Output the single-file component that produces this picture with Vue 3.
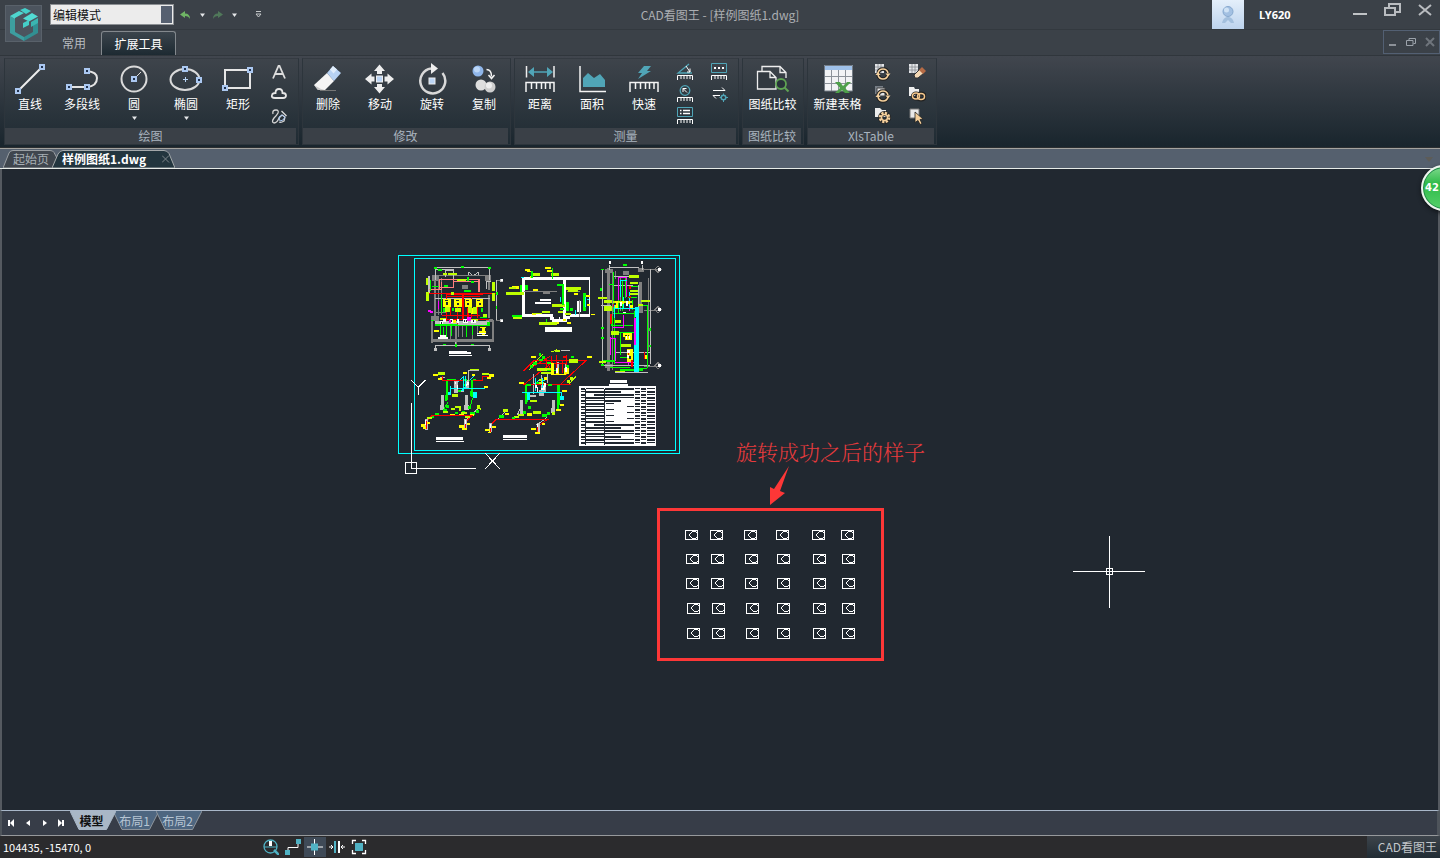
<template>
  <div class="app">
    <header class="header">
      <button class="logo" aria-label="CAD看图王">
        <svg width="36" height="36" viewBox="0 0 36 36" v-html="logo"></svg>
      </button>
      <div class="titlebar">
        <div class="quick">
          <div class="mode">
            <select v-model="mode" aria-label="模式">
              <option>编辑模式</option>
              <option>浏览模式</option>
            </select>
          </div>
          <button class="quick-btn" aria-label="撤销">
            <svg width="12" height="10" viewBox="0 0 12 10"><path d="M0 4.500L5 1v2.500q5 0 5 5.500-1.500-3-5-3v2z" fill="#6fb565" /></svg>
          </button>
          <button class="quick-arrow" aria-label="撤销列表"><svg width="5" height="4" v-html="caret"></svg></button>
          <button class="quick-btn" aria-label="重做">
            <svg width="12" height="10" viewBox="0 0 12 10"><path d="M11 4.500L6 1v2.500q-5 0-5 5.500 1.500-3 5-3v2z" fill="#50785a" /></svg>
          </button>
          <button class="quick-arrow" aria-label="重做列表"><svg width="5" height="4" v-html="caret"></svg></button>
          <button class="quick-more" aria-label="更多">
            <svg width="7" height="7" viewBox="0 0 7 7"><path d="M1 .5h5M1 3h5L3.500 6z" fill="none" stroke="#c5c8ca" /></svg>
          </button>
        </div>
        <h1 class="title">CAD看图王 - [样例图纸1.dwg]</h1>
        <div class="account">
          <div class="avatar">
            <svg width="20" height="20" viewBox="0 0 20 20">
              <path d="M4 18q1-5 5-6h2q4 1 5 6h-3l-3-3-3 3z" fill="#a3bfdd" />
              <circle cx="10" cy="6.500" r="5" fill="#a3c0e2" stroke="#86a8ce" />
              <circle cx="8.500" cy="5" r="2.500" fill="#cfe2f5" />
            </svg>
          </div>
          <span class="user">LY620</span>
          <div class="window-btns">
            <button aria-label="最小化"><svg width="18" height="16"><path d="M1 12h14" stroke="#c0c3c6" stroke-width="2" /></svg></button>
            <button aria-label="还原"><svg width="18" height="16"><path d="M5 5V2h11v8h-4M1 6h10v7H1z" fill="none" stroke="#b9bcc0" stroke-width="2" /></svg></button>
            <button aria-label="关闭"><svg width="18" height="16"><path d="M3 3l12 10M15 3l-12 10" stroke="#b9bcc0" stroke-width="2" /></svg></button>
          </div>
        </div>
      </div>
      <nav class="menu">
        <button
          v-for="item in menus"
          :key="item"
          :class="['menu-tab', { 'menu-tab--active': item === activeMenu }]"
          @click="activeMenu = item"
        >
          {{ item }}
        </button>
        <div class="child-btns">
          <button aria-label="最小化"><svg width="10" height="10"><path d="M2 8h7" stroke="#8c9198" stroke-width="2" /></svg></button>
          <button aria-label="还原"><svg width="10" height="10"><path d="M3 3V1.500h6.500v5H7.500M.5 3.500h6.500v5H.5z" fill="none" stroke="#9ca3ab" /></svg></button>
          <button aria-label="关闭"><svg width="10" height="10"><path d="M1 1l8 8M9 1l-8 8" stroke="#6f757c" stroke-width="2" /></svg></button>
        </div>
      </nav>
    </header>

    <div class="ribbon">
      <section v-for="group in groups" :key="group.title" class="group">
        <div class="group-body">
          <button
            v-for="tool in group.tools"
            :key="tool.name"
            :class="['tool', { 'tool--wide': tool.name.length > 3 }]"
          >
            <svg width="36" height="34" viewBox="0 0 36 34" v-html="icons[tool.icon]"></svg>
            <span>{{ tool.name }}</span>
            <svg v-if="tool.menu" class="tool-caret" width="5" height="4" v-html="caret"></svg>
          </button>
          <div v-if="group.small" class="small-tools">
            <button v-for="item in group.small" :key="item.name" class="small-tool" :aria-label="item.name">
              <svg width="18" height="18" viewBox="0 0 18 18" v-html="icons[item.icon]"></svg>
            </button>
          </div>
        </div>
        <h2 class="group-title">{{ group.title }}</h2>
      </section>
    </div>

    <div class="doc-tabs">
      <button class="doc-tab">
        <svg class="tab-shape" viewBox="0 0 54 18" preserveAspectRatio="none">
          <path d="M0 18L6 3q1-2.500 4-2.500h37q3 0 4 2l3 5.500v10z" fill="#3f464e" stroke="#9a9fa3" />
        </svg>
        <span>起始页</span>
      </button>
      <button class="doc-tab doc-tab--active">
        <svg class="tab-shape" viewBox="0 0 123 18" preserveAspectRatio="none">
          <path d="M0 18L6 4q2-3.500 5-3.500h101q3 0 5 3L123 18z" fill="#22353e" stroke="#a3a8aa" />
        </svg>
        <span>样例图纸1.dwg</span>
        <svg class="doc-close" width="8" height="8"><path d="M0 .5l7 7M7 .5l-7 7" stroke="#7c8589" /></svg>
      </button>
      <button class="doc-list" aria-label="文档列表"><svg width="8" height="5"><path d="M0 0h8L4 5z" fill="#5d5c58" /></svg></button>
    </div>

    <main class="canvas">
      <!-- 图纸: 3 个单位对应 1 像素 -->
      <svg class="sheet" width="300" height="240" viewBox="0 0 900 720" shape-rendering="crispEdges">
        <path d="M25.500 31.500H868.500V625.500H25.500zM73.500 40.500H856.500V616.500H73.500z" fill="none" stroke="#0ff" stroke-width="3" />
        <path v-for="(line, i) in lines" :key="i" :d="line.d" fill="none" :stroke="line.color" stroke-width="3" />
        <path v-for="(layer, i) in layers" :key="i" :d="boxes(layer.boxes)" :fill="layer.color" />
        <path d="M567 423h231v180H567z" fill="#fff" />
        <path :d="tableGaps" fill="#212830" />
        <g fill="none" stroke="#fff" stroke-width="3">
          <path d="M64.500 474V670.500H258M46.500 652.500h33v33h-33z" />
          <path d="M64 406l21 21 21-21M85.500 427v24M286 625l43 46M329 625l-43 46" />
        </g>
      </svg>

      <p class="note">旋转成功之后的样子</p>
      <svg class="note-arrow" width="22" height="40" viewBox="0 0 22 40"><path d="M20 0L11 25l5 2L1 39V21l4 2z" fill="#fd3737" /></svg>
      <svg class="result" width="227" height="153" viewBox="657 508 227 153" shape-rendering="crispEdges">
        <rect x="658.500" y="509.500" width="224" height="150" fill="none" stroke="#fd3737" stroke-width="3" />
        <g v-for="(seat, i) in seats" :key="i" :transform="`translate(${seat.x} ${seat.y})`" fill="none" stroke="#fff">
          <path :d="`M.5.5h12v${seat.h - 1}H.5z`" />
          <path d="M7.500 1.500h3l2 2v3l-2 2h-3l-3-3v-1z" />
        </g>
      </svg>

      <svg class="cursor" width="72" height="72" viewBox="0 0 72 72" shape-rendering="crispEdges">
        <path d="M36.500 0v72M0 35.500h72M33.500 32.500h6v6h-6z" fill="none" stroke="#fff" />
      </svg>
      <div class="badge">42</div>
    </main>

    <div class="layouts">
      <div class="layout-nav">
        <button v-for="nav in navs" :key="nav.name" :aria-label="nav.name">
          <svg width="8" height="8" viewBox="0 0 8 8"><path :d="nav.d" fill="#fff" /></svg>
        </button>
      </div>
      <button
        v-for="item in layouts"
        :key="item"
        :class="['layout-tab', { 'layout-tab--active': item === activeLayout }]"
        @click="activeLayout = item"
      >
        <svg class="tab-shape" viewBox="0 0 46 19" preserveAspectRatio="none"><path d="M0 0l9 18.500h27.500L46 0" /></svg>
        <span>{{ item }}</span>
      </button>
    </div>

    <footer class="status">
      <span class="coords">104435, -15470, 0</span>
      <button
        v-for="item in toggles"
        :key="item.name"
        :class="['toggle', { 'toggle--on': item.on }]"
        :aria-label="item.name"
        @click="item.on = !item.on"
      >
        <svg width="16" height="16" viewBox="0 0 16 16" v-html="item.svg"></svg>
      </button>
      <span class="brand">CAD看图王</span>
    </footer>
  </div>
</template>

<script setup>
import { ref } from 'vue';

const mode = ref('编辑模式');
const menus = ['常用', '扩展工具'];
const activeMenu = ref('扩展工具');
const layouts = ['模型', '布局1', '布局2'];
const activeLayout = ref('模型');

const caret = '<path d="M0 .5h5L2.500 4z" fill="#e4e6e8"/>';

const logo = `
  <path d="M4 10l5 3v13l9 5v4L4 27z" fill="#3d9ea0"/>
  <path d="M18 31l9-5v-8l5-3v12l-14 8z" fill="#318f92"/>
  <path d="M4 10L13 5l5 2-9 5v1z" fill="#4fd6cf"/>
  <path d="M14 4l5-2 6 3-5 3z" fill="#45cfc9"/>
  <path d="M26 7l6 3.500-9 5-6-3z" fill="#52dcd4"/>
  <path d="M17 17l6-3v5l-6 3z" fill="#45cfc9"/>
  <path d="M25 16l7-4v5l-7 4z" fill="#3bb5b1"/>`;

// 夹点方块
const node = (x, y) =>
  `<rect x="${x - 3}" y="${y - 3}" width="6" height="6" fill="#abc8f1"/><rect x="${x - 1}" y="${y - 1}" width="2" height="2" fill="#20324f"/>`;

const ruler = '<path d="M4 30V20.500h28V30M9.500 21v6M14.500 21v6M19.500 21v6M23.500 21v6M28 21v6" fill="none" stroke="#f4f4f4" stroke-width="1.500"/>';
const smallRuler = '<path d="M1.500 17v-4.500h15V17M5 13v3M8 13v3M11 13v3M14 13v3" fill="none" stroke="#fff"/>';
const grid = '<path d="M1 1h9v9H1z" fill="#e3e5e8"/><path d="M4 1v9M7 1v9M1 4h9M1 7h9" stroke="#858b91" stroke-width=".8"/>';
const cycle = '<path d="M4 10q1-4 5-4 4 0 5 4M14 12q-1 4-5 4-4 0-5-4" fill="none" stroke="#222" stroke-width="3.500"/><path d="M4 10q1-4 5-4 4 0 5 4M14 12q-1 4-5 4-4 0-5-4" fill="none" stroke="#f5d09c" stroke-width="1.500"/><path d="M1.500 12h5L4 9zM11.500 10.500h5L14 13.500z" fill="#f5d09c"/>';

const icons = {
  line: `<path d="M6 29L30 5" stroke="#eee" stroke-width="2"/>${node(30, 5)}${node(6, 29)}`,
  polyline: `<path d="M5 25h18q10-1 10-9 0-6-10-7" fill="none" stroke="#e4e4e4" stroke-width="2"/>${node(5, 25)}${node(23, 25)}${node(23, 9)}`,
  circle: `<circle cx="18" cy="17" r="12.500" fill="none" stroke="#dadada" stroke-width="2"/><path d="M18 17l7-7" stroke="#ddd"/>${node(18, 17)}`,
  ellipse: `<ellipse cx="17" cy="17.500" rx="14.500" ry="10.500" fill="none" stroke="#dadada" stroke-width="2"/><path d="M15 17.500h5M17.500 15v5" stroke="#b8d4f4"/>${node(17, 7)}${node(31, 18)}`,
  rect: `<path d="M5 8h25v18H5z" fill="none" stroke="#e6e6e6" stroke-width="2"/>${node(30, 8)}${node(5, 26)}`,
  erase: '<path d="M10 28.500h16" stroke="#777"/><path d="M4 23L17 11l7 8-9 9H8z" fill="#f5f5f5"/><path d="M4 23l4 5h7l-4-1z" fill="#c9c9c9"/><path d="M17 11l6-7 8 7-7 8z" fill="#b7d2f4"/><path d="M20 7.500L23 4l4 3.500-3.500 4z" fill="#e0edfc"/>',
  move: '<path d="M17.500 2.500l5.500 6.500h-3v3h-5V9h-3zM17.500 31.500l5.500-6.500h-3v-3h-5v3h-3zM3 17l6.500-5.500v3h3v5h-3v3zM32 17l-6.500-5.500v3h-3v5h3v3z" fill="#eee"/><rect x="14.500" y="14" width="6" height="6" fill="#bcd5f5" stroke="#eee"/>',
  rotate: '<path d="M28.500 11A12.500 12.500 0 1 1 17 6.500" fill="none" stroke="#d9d9d9" stroke-width="2.500"/><path d="M17 1l7 5.500-7 5.500z" fill="#eee"/><rect x="15" y="16" width="6" height="6" fill="#bcd5f5" stroke="#eee"/>',
  copy: '<circle cx="12" cy="9" r="5.500" fill="#8fb6ea"/><circle cx="11" cy="7.500" r="3" fill="#bcd7f8"/><circle cx="15" cy="23" r="5.500" fill="#dedede"/><circle cx="24" cy="25" r="5.500" fill="#cfcfcf"/><circle cx="23" cy="23.500" r="3" fill="#eee"/><path d="M20.500 7.500q5 0 5 7M22.500 13l3 3.500 3-3.500" fill="none" stroke="#f4f4f4" stroke-width="1.500"/>',
  distance: `<path d="M4.500 4v11.500M32 4v11.500" stroke="#eee" stroke-width="1.500"/><path d="M9 10h19" stroke="#50a5b7" stroke-width="1.500"/><path d="M6 10l6-5v10zM31 10l-6-5v10z" fill="#50a5b7"/>${ruler}`,
  area: '<path d="M9 25v-9l5-5 6 5 6-4 5 6v7z" fill="#50a5b7"/><path d="M6 4v25.500h26" fill="none" stroke="#f4f4f4" stroke-width="1.500"/>',
  fast: `<path d="M18 4h7l-4 5h4L12 17l4-6h-4z" fill="#50a5b7"/>${ruler}`,
  compare: '<path d="M7 9V4.500h18l6 6V16M25 4.500v6h6" fill="none" stroke="#eee" stroke-width="1.300"/><path d="M2.500 9.500H15l6 6V27H2.500zM15 9.500v6h6" fill="#323940" stroke="#eee" stroke-width="1.300"/><circle cx="26" cy="22" r="5" fill="#29323a" stroke="#5fa453" stroke-width="1.800"/><path d="M29.500 25.500l4 4" stroke="#5fa453" stroke-width="2"/>',
  sheet: '<path d="M4 4h29v25H4z" fill="#f2f3f5"/><path d="M4 3h29v5H4z" fill="#9fc1ea"/><path d="M4 14.500h29M4 21.500h29M11.500 8v21M18.500 8v21M25.500 8v21" stroke="#8c9299"/><path d="M4.500 3.500h28v25.500h-28z" fill="none" stroke="#747c85"/><path d="M15 20h5l3 4 4-4h4l-6 6 5 5h-5l-3-3-3 3h-4l5-5z" fill="#4ea04a"/>',
  text: '<path d="M3 15.500L8.500 3h1L15 15.500M5.500 11h7" fill="none" stroke="#dcdcdc" stroke-width="1.800"/>',
  cloud: '<path d="M5 13q-4 0-3-3 .5-2 3.500-2 0-4 3.500-4 3.500 0 3.500 4 3.500 0 3.500 2.500 0 2.500-3 2.500z" fill="none" stroke="#e6e6e6" stroke-width="1.800"/>',
  sketch: '<path d="M3 7q-1-4 3-4 3 0 2 3-1 2-4 5-3 4 0 5 3 0 5-5l3-3 3 2-1 4q-3 2-5 1" fill="none" stroke="#d6d6d6" stroke-width="1.300"/><path d="M11.500 4l5 5" stroke="#e0e0e0" stroke-width="1.300"/><path d="M9 10l3-2 3 2-2 3-3 1z" fill="none" stroke="#abc8f1"/>',
  angle: `<path d="M13 1L2 10h14" fill="none" stroke="#50a5b7" stroke-width="1.300"/><path d="M10 3l4 6M14 5.500V9h-3" fill="none" stroke="#fff"/>${smallRuler}`,
  radius: `<circle cx="9" cy="5.500" r="4.800" fill="none" stroke="#50a5b7" stroke-width="1.300"/><path d="M7 7V3.500h3.500M7 3.500l4 4" fill="none" stroke="#fff"/>${smallRuler}`,
  list: `<path d="M1.500.5h15v9h-15z" fill="none" stroke="#50a5b7"/><path d="M4 3.500h1.500M7 3.500h7M4 6.500h1.500M7 6.500h7" stroke="#fff" stroke-width="1.500"/>${smallRuler}`,
  dots: `<path d="M1.500.5h15v9h-15z" fill="none" stroke="#50a5b7"/><path d="M4 5h2M8 5h2M12 5h2" stroke="#fff" stroke-width="2"/>${smallRuler}`,
  convert: '<path d="M3 5.500h12l-3-3M10 10.500H3l3 3" fill="none" stroke="#fff"/><circle cx="13.500" cy="12.500" r="2.300" fill="none" stroke="#50a5b7" stroke-width="1.500"/><path d="M13.500 8.500v2M13.500 15v2M9.500 12.500h2M16 12.500h2" stroke="#50a5b7"/>',
  refresh: `${grid}${cycle}`,
  refreshAll: '<path d="M1 1h8v8H1z" fill="#777e86"/><path d="M3 3h8v8H3z" fill="#e3e5e8" stroke="#444"/>' + cycle,
  config: '<path d="M1 1h5l2 2h4v7H1z" fill="#ececec"/><circle cx="10.500" cy="10.500" r="4" fill="none" stroke="#222" stroke-width="5"/><circle cx="10.500" cy="10.500" r="4.500" fill="none" stroke="#f5d09c" stroke-width="2.500" stroke-dasharray="2.200 1.300"/><circle cx="10.500" cy="10.500" r="3" fill="none" stroke="#f5d09c" stroke-width="1.500"/>',
  clear: `${grid}<path d="M6 12l6-6 4 4-6 5H7z" fill="#f5d9b5" stroke="#333"/><path d="M11 7l3-3 4 4-3 3z" fill="#b66b45"/>`,
  link: '<path d="M1 2h5l1 2h4v7H1z" fill="#eee"/><ellipse cx="8" cy="11" rx="3.500" ry="3" fill="none" stroke="#222" stroke-width="3"/><ellipse cx="13" cy="11.500" rx="4" ry="3" fill="none" stroke="#222" stroke-width="4"/><ellipse cx="8" cy="11" rx="3.500" ry="3" fill="none" stroke="#f5c78c" stroke-width="1.500"/><ellipse cx="13" cy="11.500" rx="3.500" ry="3" fill="none" stroke="#f5c78c" stroke-width="1.500"/>',
  pick: '<path d="M2 2h9v9H2z" fill="#e9e9e9" stroke="#777"/><path d="M7 5l8 7-3 .5 2 4-2 1-2-4-3 2z" fill="#f5d09c" stroke="#222" stroke-width=".8"/>',
};

const groups = [
  {
    title: '绘图',
    tools: [
      { name: '直线', icon: 'line' },
      { name: '多段线', icon: 'polyline' },
      { name: '圆', icon: 'circle', menu: true },
      { name: '椭圆', icon: 'ellipse', menu: true },
      { name: '矩形', icon: 'rect' },
    ],
    small: [
      { name: '文字', icon: 'text' },
      { name: '云线', icon: 'cloud' },
      { name: '手绘', icon: 'sketch' },
    ],
  },
  {
    title: '修改',
    tools: [
      { name: '删除', icon: 'erase' },
      { name: '移动', icon: 'move' },
      { name: '旋转', icon: 'rotate' },
      { name: '复制', icon: 'copy' },
    ],
  },
  {
    title: '测量',
    tools: [
      { name: '距离', icon: 'distance' },
      { name: '面积', icon: 'area' },
      { name: '快速', icon: 'fast' },
    ],
    small: [
      { name: '角度', icon: 'angle' },
      { name: '半径', icon: 'radius' },
      { name: '列表', icon: 'list' },
      { name: '坐标', icon: 'dots' },
      { name: '比例', icon: 'convert' },
    ],
  },
  { title: '图纸比较', tools: [{ name: '图纸比较', icon: 'compare' }] },
  {
    title: 'XlsTable',
    tools: [{ name: '新建表格', icon: 'sheet' }],
    small: [
      { name: '更新表格', icon: 'refresh' },
      { name: '全部更新', icon: 'refreshAll' },
      { name: '设置', icon: 'config' },
      { name: '清除', icon: 'clear' },
      { name: '链接', icon: 'link' },
      { name: '选择', icon: 'pick' },
    ],
  },
];

const navs = [
  { name: '第一个', d: 'M0 1h2v6H0zM6 0v8L2 4z' },
  { name: '上一个', d: 'M6 1v6L2 4z' },
  { name: '下一个', d: 'M3 1v6l4-3z' },
  { name: '最后一个', d: 'M2 0v8l4-4zM6 1h2v6H6z' },
];

const toggles = ref([
  { name: '缩放', on: false, svg: '<circle cx="7.500" cy="7.500" r="6.500" fill="none" stroke="#50b2c4" stroke-width="1.300"/><path d="M1 8h13" stroke="#50b2c4"/><path d="M6 2h3v5H6z" fill="#fff"/><path d="M11 11l5 5" stroke="#50b2c4" stroke-width="2.500"/>' },
  { name: '正交', on: false, svg: '<path d="M3 12V8.500h10V4" fill="none" stroke="#fff"/><path d="M11 0h5v5h-5zM0 11h5v5H0z" fill="#50b2c4"/>' },
  { name: '对象捕捉', on: true, svg: '<path d="M7.500 0v16M0 8h16" stroke="#fff"/><path d="M4 4.500h7v7H4z" fill="#50b2c4"/>' },
  { name: '线宽', on: false, svg: '<path d="M5 2h2v12H5z" fill="#50b2c4"/><path d="M10 2v12" stroke="#fff" stroke-width="2"/><path d="M0 8h4M2 6l2 2-2 2M16 8h-4M14 6l-2 2 2 2" fill="none" stroke="#fff"/>' },
  { name: '全屏', on: false, svg: '<path d="M1.500 5V1.500H5M11 1.500h3.500V5M14.500 11v3.500H11M5 14.500H1.500V11" fill="none" stroke="#fff" stroke-width="1.300"/><path d="M4 4h8v8H4z" fill="#50b2c4"/>' },
]);

// 对齐到整像素
const snap = (value) => Math.round(value / 3) * 3;

// 每四个数一组: x y 宽 高
const boxes = (text) =>
  text
    .trim()
    .split(/\s*,\s*/)
    .map((item) => {
      const [x, y, w, h] = item.split(' ').map(snap);
      const width = Math.max(w, 3);
      return `M${x} ${y}h${width}v${Math.max(h, 3)}h-${width}z`;
    })
    .join('');

const layers = [
  // 平面图
  { color: '#808080', boxes: '126 90 20 18,126 90 174 4,285 90 17 18,132 95 5 120,145 100 3 110,153 100 3 112,294 110 6 25,294 150 7 70,122 212 25 15,288 222 22 8,122 226 5 70,125 283 187 8,194 240 6 60,217 120 17 12,205 232 3 45,215 232 3 45,260 235 3 40,305 225 5 60,320 104 12 3,318 225 12 3,133 200 40 4,180 240 3 44,246 238 3 44' },
  { color: '#c0c0c0', boxes: '135 66 165 3,135 66 3 40,298 66 3 40,114 93 5 50,318 104 3 120,135 300 165 3,135 300 3 15,298 300 3 15,196 290 3 14,135 72 55 3,135 238 165 3,135 158 165 3,189 72 3 50,288 108 14 3,288 108 3 25,166 76 24 3,166 76 3 20,132 309 9 9,294 309 9 9,330 101 9 9,330 222 9 9,136 228 162 9' },
  { color: '#ff7f7f', boxes: '148 102 122 3,148 102 4 30,190 108 80 3,265 105 5 36,150 127 42 3,189 105 3 24,118 131 38 3,154 110 3 20' },
  { color: '#f00', boxes: '118 144 200 3,168 148 110 4,168 148 4 65,217 150 6 75,172 153 100 3,155 210 115 4,202 180 3 60,262 180 4 40,244 160 3 60,232 190 6 30,180 180 3 32,168 190 4 40,155 222 140 3' },
  { color: '#ff0', boxes: '160 162 23 24,192 162 23 24,224 162 20 24,258 162 20 24,270 246 18 4,275 246 8 24,268 258 20 5,131 256 14 6,184 225 14 8,244 188 14 18' },
  { color: '#212830', boxes: '166 166 10 4,168 172 5 8,198 166 10 4,201 174 6 6,228 166 8 4,230 173 5 7,262 166 9 4,266 173 6 7,248 192 3 8' },
  { color: '#bfff00', boxes: '108 98 6 20,108 141 10 27,306 110 8 28,306 144 8 24,175 84 26 7,202 101 26 7,160 85 12 7,164 186 14 15,196 188 18 12,235 186 12 18,250 186 12 20,278 206 13 8,183 140 8 10,240 222 24 6,150 218 18 5' },
  { color: '#0f0', boxes: '131 66 8 6,212 63 10 5,295 66 9 6,144 72 12 5,232 97 5 12,120 106 4 32,318 140 6 8,318 182 4 8,153 150 4 55,242 109 10 5,160 298 10 4,194 296 6 9,242 296 10 4,126 122 20 3,223 135 20 5,135 236 70 3,135 241 165 3,150 240 3 40,159 245 3 35,168 242 3 38,184 242 3 30,228 240 3 36,246 242 3 26,270 215 20 3,158 188 5 12,186 190 5 10,272 190 5 12,122 226 10 4,290 230 10 8,162 120 11 5' },
  { color: '#fff', boxes: '145 275 29 6,150 270 18 5,262 265 28 4,262 269 33 4,160 222 8 9,180 222 9 12,202 222 5 12,218 222 15 12,244 224 15 10,150 228 8 8,177 318 54 3,177 321 66 6,177 330 69 3,332 103 5 5,332 224 5 5' },
  { color: '#f0f', boxes: '145 167 4 24,114 195 10 6,119 199 10 5,231 216 12 12,176 226 5 9' },
  { color: '#212830', boxes: '154 230 3 6,184 224 3 6,222 225 3 7,250 226 3 5,228 226 3 5' },
  // 剖面图
  { color: '#fff', boxes: '396 96 204 9,396 96 9 120,398 207 90 9,519 100 9 124,597 96 3 120,540 207 58 8,450 162 32 6,435 171 48 6,465 246 81 15,561 167 12 32,480 216 12 8,486 222 12 9,496 222 35 9,524 212 16 8,508 215 4 16,522 215 4 16' },
  { color: '#808080', boxes: '402 138 100 3,458 141 20 6,567 165 3 50,530 139 40 3' },
  { color: '#ff0', boxes: '404 72 15 6,412 77 12 4,420 92 8 5,464 66 18 5,470 74 14 5,366 122 22 8,428 132 16 6,426 204 12 5,494 231 12 7,531 232 12 5,602 206 12 4,592 178 10 5,586 150 14 6,520 222 10 6,552 143 12 5' },
  { color: '#bfff00', boxes: '428 85 22 10,484 85 25 10,348 140 55 9,358 125 22 6,368 214 28 10,528 126 45 10,534 135 30 6,486 177 38 10,446 230 55 8,430 204 26 4,455 198 25 5,504 198 16 6,526 205 18 6' },
  { color: '#0f0', boxes: '424 78 5 22,485 68 4 34,389 121 5 20,404 120 9 16,366 210 30 5,516 120 6 60,580 144 9 54,528 170 8 26,509 190 12 7,500 118 22 5,540 190 8 10,468 222 4 8' },
  { color: '#0ff', boxes: '394 95 8 3,510 155 4 15,586 156 3 30,556 196 3 16,591 163 5 4' },
  // 立面图
  { color: '#808080', boxes: '651 68 9 310,645 72 23 12,744 68 18 12,699 78 18 13,690 98 3 100,774 100 3 220,665 85 3 290,746 110 9 80,748 184 12 20,762 73 42 3,762 194 42 3,762 362 42 3,645 357 24 12,742 315 6 60,676 78 4 24' },
  { color: '#c0c0c0', boxes: '658 66 90 3,636 72 3 290,780 72 3 285,657 60 3 15,755 60 3 15,633 180 30 3,675 320 108 3,640 360 140 3,668 92 78 3,668 120 60 3,676 382 98 3,744 120 3 70' },
  { color: '#0f0', boxes: '668 80 3 120,672 198 3 160,700 58 12 5,632 72 8 4,630 128 7 9,656 118 14 4,684 115 3 90,696 108 3 90,669 204 66 3,667 240 64 3,682 262 54 3,691 262 3 70,690 335 40 3,772 180 3 190,733 197 4 115,723 122 20 3,640 345 35 6,660 365 60 3,690 373 70 5,750 180 24 3,634 245 9 5,634 276 9 5,776 250 6 9,776 300 6 5,705 100 3 60,715 155 28 3,725 165 3 30,664 212 5 30,742 370 30 4,632 356 9 5' },
  { color: '#bfff00', boxes: '624 156 28 6,642 165 24 8,642 182 23 15,716 90 30 8,720 112 25 6,720 134 25 6,668 168 58 6,674 225 18 10,662 258 25 12,694 296 30 8,752 166 26 6,674 378 30 4,626 348 22 6,718 145 28 5,744 176 16 6' },
  { color: '#f0f', boxes: '685 96 3 70,685 96 26 3,732 220 8 95,660 276 3 55,660 280 18 3,675 280 3 70,675 351 58 3,700 210 3 38,708 96 3 60,670 246 32 3,718 160 3 40,715 320 3 40' },
  { color: '#0ff', boxes: '738 185 10 195,735 185 12 30,690 105 3 50,690 105 22 3,672 180 3 40,672 188 64 3,716 140 3 45,700 155 3 36,732 300 6 80' },
  { color: '#ff0', boxes: '700 263 26 12,704 273 20 12,674 168 8 22,692 168 8 8,712 168 10 10,710 312 17 38,764 330 6 12,720 180 9 8' },
  { color: '#f00', boxes: '661 208 5 30,716 124 6 8,718 152 6 6,715 322 4 8,761 320 4 22,722 345 5 20,668 176 4 8' },
  { color: '#fff', boxes: '657 49 6 9,753 49 6 9,804 69 8 9,804 190 8 9,804 358 8 9,709 168 5 16,690 170 5 12,712 315 9 10,712 330 6 9,708 274 3 9,718 274 3 9,700 200 8 4' },
  { color: '#212830', boxes: '704 269 5 4,714 269 4 4,716 333 6 8,674 174 4 6' },
  // 左侧系统图
  { color: '#c0c0c0', boxes: '154 450 8 46,150 480 12 15,226 450 8 46,221 480 14 14,193 407 12 35,228 405 9 24,150 395 16 3,234 375 3 30,192 438 30 3,198 420 3 20,280 388 20 3,104 523 8 32,222 523 8 32,202 484 12 3,234 375 32 3' },
  { color: '#0f0', boxes: '169 405 5 60,168 420 7 20,166 450 7 18,243 405 6 50,240 438 9 16,171 403 28 6,220 402 12 6,248 402 8 6,158 493 12 8,168 480 9 10,235 482 9 10,240 500 14 10,134 505 12 8,196 500 10 6,215 498 8 8,126 514 6 6,258 494 8 8,203 436 8 5' },
  { color: '#bfff00', boxes: '145 380 20 8,240 372 26 4,275 384 20 6,187 448 17 9,194 483 18 6,182 490 12 6,160 498 16 6,262 480 10 12,270 490 4 5,206 488 6 8,212 500 18 5,112 515 14 7,224 514 14 7' },
  { color: '#ff0', boxes: '130 387 16 6,144 400 12 7,220 380 12 7,245 388 8 6,298 386 14 8,290 397 12 7,282 424 12 7,180 508 14 6,208 506 16 7,240 508 12 7,92 537 12 9,100 546 10 5,110 531 10 6,206 540 14 8,216 548 14 5,232 533 10 7' },
  { color: '#f00', boxes: '157 394 3 14,157 405 65 3,250 405 30 3,276 394 3 14,276 394 22 3,128 510 120 3,108 528 4 24,226 528 4 22' },
  { color: '#0ff', boxes: '179 424 3 26,174 442 10 10,180 429 106 3,218 394 3 44,224 394 3 30,249 440 12 18' },
  { color: '#fff', boxes: '195 412 4 6,202 420 4 12,230 410 5 8,228 418 4 6,106 524 4 14,224 524 4 12,138 576 81 9,138 588 84 3,339 570 72 9,339 582 72 3,660 405 51 9,657 417 57 6' },
  // 右侧系统图
  { color: '#c0c0c0', boxes: '429 388 3 60,432 415 14 6,390 464 9 45,486 464 8 45,452 390 3 40,458 420 10 24,296 535 8 28,440 535 8 30,512 315 28 3,446 434 16 18,484 490 13 15,418 450 22 5,470 386 4 28,526 358 6 12,497 366 8 18,502 350 6 20' },
  { color: '#f00', boxes: '430 345 158 3,438 354 90 3,468 340 3 30,484 332 4 50,497 330 3 56,520 332 10 5,528 330 3 60,400 418 145 3,320 522 155 3,440 540 4 20,300 540 3 20,516 344 3 40' },
  { color: '#bfff00', boxes: '440 368 50 8,452 380 30 6,447 410 16 7,536 342 26 12,495 316 16 6,420 464 22 6,430 498 24 8,340 492 16 8,384 508 18 6,372 514 14 6,485 500 10 10,540 396 10 8,532 404 10 8,446 402 12 6' },
  { color: '#0f0', boxes: '406 420 6 56,404 440 8 30,502 420 8 60,430 350 12 8,420 360 10 8,448 342 12 6,456 334 8 8,448 324 6 8,472 350 12 5,470 375 30 4,408 416 14 6,436 412 12 7,475 417 12 6,544 332 9 6,398 498 10 8,414 484 10 8,456 508 14 9,470 500 8 8,366 515 10 6,328 510 14 8,502 476 7 20,527 360 8 12' },
  { color: '#ff0', boxes: '424 333 14 7,590 334 14 7,484 355 8 36,498 368 10 18,522 370 14 18,386 410 14 6,462 396 10 8,516 435 14 6,510 478 12 6,498 492 14 6,346 504 12 6,410 503 16 8,456 535 8 6,284 552 14 7,294 560 10 4,306 543 12 7,424 550 14 7,434 560 14 6,484 386 44 3' },
  { color: '#0ff', boxes: '396 441 120 3,510 452 12 12,410 442 8 24,436 400 3 40,457 400 3 38,458 404 6 4,514 442 3 20' },
  { color: '#fff', boxes: '434 420 5 10,440 425 3 14,462 414 6 12,460 424 5 12,499 368 5 14,526 366 5 14,442 538 4 8,300 536 3 12,452 430 5 6' },
];

const lines = [
  { color: '#c0c0c0', d: 'M236 80l12 12M268 80l-18 12M236 80v14M266 80v14' },
  { color: '#0f0', d: 'M240 405l-22 20M175 470l-15 25M248 460l-10 32' },
  { color: '#0ff', d: 'M205 410l16-16M242 404l10-12M232 420l-20 20M440 410l18-10' },
  { color: '#c0c0c0', d: 'M104 532l24-18M222 532l18-18M265 490l-16 16M352 495l-28 26M300 540l20-18M440 540l30-22M392 488l-10 22' },
  { color: '#f00', d: 'M430 348l-30 30M590 345l-80 74M490 350l-88 68M420 370l60-36M480 370l-15-30M128 510l-20 20M248 510l-20 20M320 522l-20 20M475 522l-30 20' },
  { color: '#bfff00', d: 'M420 368l40-42M482 322l18-8M536 418l22-24M418 374l20-20' },
  { color: '#808080', d: 'M804 64l10 9-10 9-10-9zM804 185l10 9-10 9-10-9zM804 353l10 9-10 9-10-9z' },
];

// 材料表: 各列的宽度和留白
const columns = [[573, 12], [588, 54], [645, 87], [735, 15], [753, 15], [771, 24]];
const gapRows = Array.from({ length: 19 }, (_, i) => 429 + i * 9);
const tableGaps = boxes(
  gapRows
    .flatMap((y, i) =>
      columns.map(([x, w], c) => {
        if (c === 2 && i > 4 && i < 12) return i % 2 ? `${x + 3} ${y} 24 3` : `${x + 66} ${y} 20 3`;
        if (c === 2 && i % 3 === 1) return `${x} ${y} 48 6`;
        if (c === 1 && (i === 2 || i === 12)) return `${x + 24} ${y} 30 6`;
        return `${x} ${y} ${w} ${(i + c) % 2 ? 3 : 6}`;
      })
    )
    .concat(['642 432 3 168', '585 432 3 168'])
    .join(',')
);

const seatRows = [
  { y: 530, h: 10, xs: [685, 710, 744, 776, 812, 841] },
  { y: 554, h: 10, xs: [686, 711, 745, 777, 813, 842] },
  { y: 578, h: 11, xs: [686, 711, 745, 777, 813, 842] },
  { y: 603, h: 11, xs: [687, 712, 746, 777, 813, 842] },
  { y: 628, h: 11, xs: [687, 712, 746, 777, 813, 842] },
];
const seats = seatRows.flatMap(({ y, h, xs }) => xs.map((x) => ({ x, y, h })));
</script>

<style>
body {
  margin: 0;
  background: #2b2b2d;
}
</style>

<style scoped>
.app {
  display: flex;
  flex-direction: column;
  min-height: 100vh;
  overflow: hidden;
  font-family: 'Noto Sans CJK SC', 'Noto Sans', sans-serif;
  font-size: 12px;
  line-height: 16px;
  color: #fff;
}

button {
  display: flex;
  align-items: center;
  justify-content: center;
  padding: 0;
  border: none;
  background: none;
  color: inherit;
  font: inherit;
}

svg {
  display: block;
  flex: none;
}

h1,
h2,
p {
  margin: 0;
  font-size: 12px;
  font-weight: 400;
}

.header {
  position: relative;
  background: #3b4148;
}

.logo {
  position: absolute;
  left: 5px;
  top: 5px;
  width: 37px;
  height: 37px;
  box-sizing: border-box;
  border: 1px solid #59616a;
  background: #4c545e;
}

.titlebar {
  display: grid;
  grid-template-columns: 1fr auto 1fr;
  align-items: center;
  height: 29px;
  border-bottom: 1px solid #33393f;
}

.quick {
  display: flex;
  align-items: center;
  padding-left: 50px;
}

.mode {
  position: relative;
  margin-right: 6px;
}

.mode::after {
  content: '';
  position: absolute;
  right: 2px;
  top: 2px;
  width: 11px;
  bottom: 2px;
  background: #566070;
  pointer-events: none;
}

.mode select {
  display: block;
  width: 124px;
  height: 21px;
  padding: 0 2px;
  border: 1px solid #8b8f93;
  border-radius: 0;
  outline: 0;
  background: #ececec;
  color: #111;
  font: inherit;
  appearance: none;
}

.quick-btn {
  width: 12px;
}

.quick-arrow {
  width: 20px;
}

.quick-more {
  width: 29px;
}

.title {
  color: #abaeb2;
}

.account {
  display: flex;
  align-items: center;
  justify-content: flex-end;
  height: 29px;
}

.avatar {
  display: flex;
  align-items: center;
  justify-content: center;
  width: 32px;
  height: 29px;
  background: linear-gradient(#e4effb, #bdd3ed);
}

.user {
  width: 108px;
  padding-left: 15px;
  box-sizing: border-box;
  font-family: 'Noto Sans', sans-serif;
  font-size: 11px;
  font-weight: 700;
}

.window-btns {
  display: flex;
  gap: 14px;
  height: 20px;
  padding-right: 6px;
  align-self: flex-start;
}

.menu {
  display: flex;
  align-items: flex-end;
  height: 25px;
  padding-left: 47px;
  border-bottom: 1px solid #30363c;
}

.menu-tab {
  height: 24px;
  width: 54px;
  color: #b8bcc0;
}

.menu-tab--active {
  width: 75px;
  border: 1px solid #83888d;
  border-bottom: none;
  border-radius: 3px 3px 0 0;
  background: linear-gradient(#3b444c, #1d2a32);
  color: #fff;
}

.child-btns {
  display: flex;
  align-items: center;
  align-self: flex-start;
  gap: 9px;
  height: 22px;
  margin-left: auto;
  padding: 0 4px 0 3px;
  border: 1px solid #536073;
}

.ribbon {
  display: flex;
  gap: 3px;
  padding: 2px 4px;
  background: linear-gradient(#41464e, #19252d);
  border-bottom: 1px solid #2c2f32;
}

.group {
  display: flex;
  flex-direction: column;
  box-sizing: border-box;
  border: 1px solid #2d353c;
  border-top-color: #353b42;
  background: linear-gradient(#3e444b, #1f2b33);
}

.group-body {
  display: flex;
  height: 69px;
  margin-left: -1px;
}

.tool {
  flex-direction: column;
  justify-content: flex-start;
  width: 52px;
  padding-top: 3px;
}

.tool--wide {
  width: 61px;
}

.tool-caret {
  margin-top: 4px;
}

.small-tools {
  display: grid;
  grid-auto-flow: column;
  grid-template-rows: repeat(3, 22px);
  grid-auto-columns: 30px;
  column-gap: 4px;
  padding: 2px 4px 0 0;
}

.group-title {
  margin-right: 2px;
  background: #3a4047;
  text-align: center;
  color: #a9b4bf;
}

.doc-tabs {
  display: flex;
  height: 18px;
  padding: 1px 0 0 3px;
  border-top: 1px solid #a4a39f;
  border-bottom: 1px solid #e6ebe8;
  background: #55606e;
}

.doc-tab {
  position: relative;
  justify-content: flex-start;
  width: 54px;
  padding-left: 10px;
  color: #a8b0b5;
}

.doc-tab--active {
  width: 123px;
  margin-left: -5px;
  color: #fff;
  font-weight: 700;
}

.doc-tab span,
.layout-tab span {
  position: relative;
  white-space: nowrap;
}

.doc-close {
  position: relative;
  margin-left: auto;
  margin-right: 5px;
}

.tab-shape {
  position: absolute;
  left: 0;
  top: 0;
  width: 100%;
  height: 100%;
}

.doc-list {
  width: 8px;
  margin-left: auto;
  margin-right: 7px;
}

.canvas {
  position: relative;
  flex: 1;
  min-height: 500px;
  border-left: 2px solid #555a60;
  border-right: 2px solid #555a60;
  background: #212830;
}

.sheet {
  position: absolute;
  left: 388px;
  top: 76px;
}

.note {
  position: absolute;
  left: 734px;
  top: 269px;
  font-family: 'Noto Serif CJK SC', 'Noto Sans CJK SC', serif;
  font-size: 21px;
  font-weight: 300;
  line-height: 26px;
  color: #e83b3d;
}

.note-arrow {
  position: absolute;
  left: 767px;
  top: 297px;
}

.result {
  position: absolute;
  left: 655px;
  top: 339px;
}

.cursor {
  position: absolute;
  left: 1071px;
  top: 367px;
}

.badge {
  position: absolute;
  right: -29px;
  top: -4px;
  width: 46px;
  height: 46px;
  padding-left: 2px;
  box-sizing: border-box;
  border: 2px solid #eef5ef;
  border-radius: 50%;
  background: linear-gradient(#7ed98d, #2fbb49 40%, #55d06a);
  box-shadow: inset 0 0 0 1px #21874a, 0 2px 4px #101418;
  font-family: 'DejaVu Sans', sans-serif;
  font-size: 10px;
  font-weight: 700;
  line-height: 42px;
}

.layouts {
  display: flex;
  height: 24px;
  border: 2px solid #4e545b;
  border-top: 1px solid #a9b7c9;
  border-bottom: 1px solid #96999c;
  border-right-width: 3px;
  background: #373d48;
}

.layout-nav {
  display: flex;
  align-items: center;
  gap: 8px;
  padding: 0 6px 0 6px;
}

.layout-nav button {
  width: 8px;
}

.layout-tab {
  position: relative;
  width: 46px;
  height: 19px;
  margin-right: -3px;
  padding-right: 3px;
  color: #b7c5d4;
}

.layout-tab path {
  fill: #4e6680;
  stroke: #8d949c;
}

.layout-tab--active {
  z-index: 1;
  color: #111;
  font-weight: 700;
}

.layout-tab--active path {
  fill: #a9b7c6;
  stroke: #a9b7c6;
}

.status {
  display: flex;
  align-items: center;
  height: 22px;
  background: #2b2b2d;
}

.coords {
  width: 260px;
  padding-left: 3px;
  box-sizing: border-box;
  font-size: 11px;
}

.toggle {
  width: 22px;
  height: 20px;
}

.toggle--on {
  background: #3f4a57;
}

.brand {
  margin-left: auto;
  padding: 3px 3px 3px 11px;
  background: linear-gradient(#3d444b, #212c34);
  color: #c3c7cb;
}
</style>
